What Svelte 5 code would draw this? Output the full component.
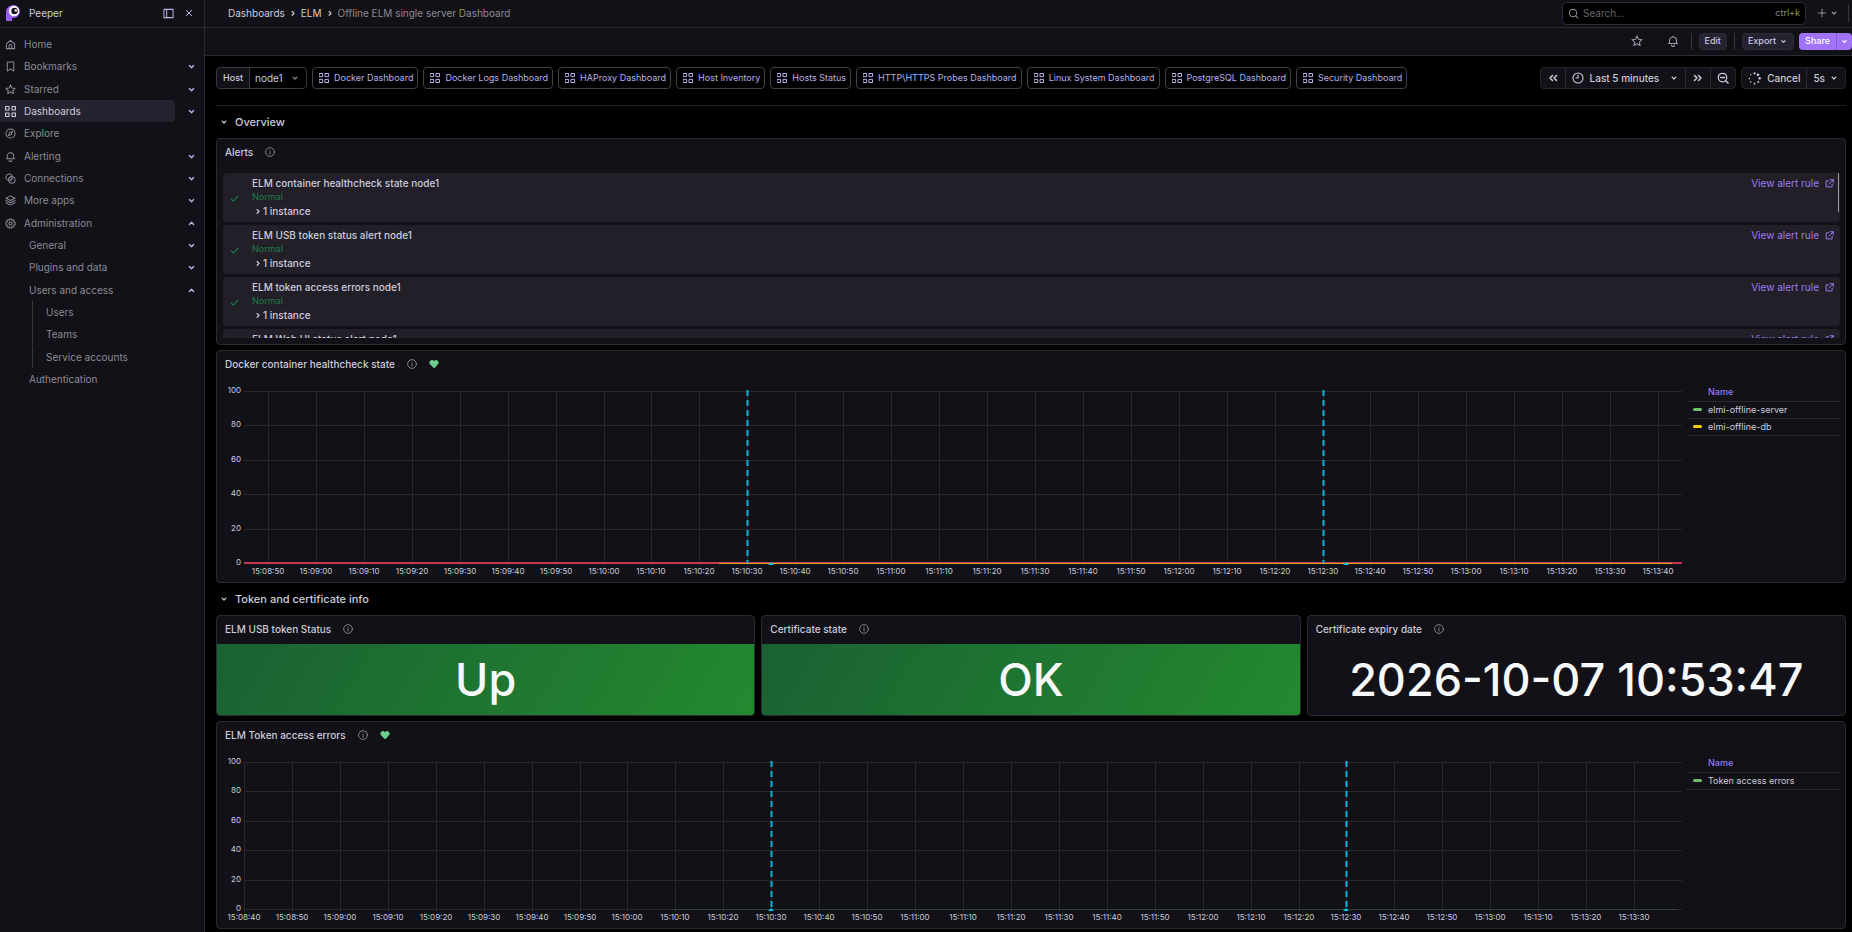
<script lang="ts">
	interface NavItem {
		label: string;
		icon?: string;
		level: number;
		arrow?: 'down' | 'up';
		active?: boolean;
	}

	interface Chart {
		id: string;
		title: string;
		/** offset of the first tick from the left edge, in seconds */
		lead: number;
		/** time of the first tick, in seconds since midnight */
		first: number;
		/** plot height */
		height: number;
		lines: { color: string; from: number; to: number; width: number }[];
		annotations: { line: number; mark: number }[];
		legend: { name: string; color: string }[];
	}

	const nav: NavItem[] = [
		{ label: 'Home', icon: 'home', level: 0 },
		{ label: 'Bookmarks', icon: 'bookmark', level: 0, arrow: 'down' },
		{ label: 'Starred', icon: 'star', level: 0, arrow: 'down' },
		{ label: 'Dashboards', icon: 'apps', level: 0, arrow: 'down', active: true },
		{ label: 'Explore', icon: 'compass', level: 0 },
		{ label: 'Alerting', icon: 'bell', level: 0, arrow: 'down' },
		{ label: 'Connections', icon: 'link', level: 0, arrow: 'down' },
		{ label: 'More apps', icon: 'layers', level: 0, arrow: 'down' },
		{ label: 'Administration', icon: 'cog', level: 0, arrow: 'up' },
		{ label: 'General', level: 1, arrow: 'down' },
		{ label: 'Plugins and data', level: 1, arrow: 'down' },
		{ label: 'Users and access', level: 1, arrow: 'up' },
		{ label: 'Users', level: 2 },
		{ label: 'Teams', level: 2 },
		{ label: 'Service accounts', level: 2 },
		{ label: 'Authentication', level: 1 }
	];

	const links = [
		'Docker Dashboard',
		'Docker Logs Dashboard',
		'HAProxy Dashboard',
		'Host Inventory',
		'Hosts Status',
		'HTTP\\HTTPS Probes Dashboard',
		'Linux System Dashboard',
		'PostgreSQL Dashboard',
		'Security Dashboard'
	];

	const alerts = [
		'ELM container healthcheck state node1',
		'ELM USB token status alert node1',
		'ELM token access errors node1',
		'ELM Web UI status alert node1'
	];

	const stats = [
		{ title: 'ELM USB token Status', value: 'Up', ok: true },
		{ title: 'Certificate state', value: 'OK', ok: true },
		{ title: 'Certificate expiry date', value: '2026-10-07 10:53:47', ok: false }
	];

	const at = (h: number, m: number, s: number) => h * 3600 + m * 60 + s;

	const health: Chart = {
		id: 'health',
		title: 'Docker container healthcheck state',
		lead: 5,
		first: at(15, 8, 50),
		height: 172,
		lines: [
			{ color: '#c4394f', from: 0, to: 300, width: 2 },
			{ color: '#d6a52c', from: 99, to: 298, width: 1 }
		],
		annotations: [
			{ line: 105, mark: 110 },
			{ line: 225, mark: 230 }
		],
		legend: [
			{ name: 'elmi-offline-server', color: '#73bf69' },
			{ name: 'elmi-offline-db', color: '#f2cc0c' }
		]
	};

	const tokens: Chart = {
		id: 'tokens',
		title: 'ELM Token access errors',
		lead: 0,
		first: at(15, 8, 40),
		height: 147,
		lines: [{ color: '#2c4432', from: 89, to: 299, width: 1 }],
		annotations: [
			{ line: 110, mark: 110 },
			{ line: 230, mark: 230 }
		],
		legend: [{ name: 'Token access errors', color: '#73bf69' }]
	};

	const span = 300;
	const axis = 27;

	// small glyphs that need a heavier stroke
	const heavy = ['down', 'up', 'right', 'back', 'forward', 'check', 'close', 'external', 'zoom-out'];

	let widths = $state<Record<string, number>>({ health: 1466, tokens: 1466 });

	function clock(t: number) {
		return [Math.floor(t / 3600), Math.floor(t / 60) % 60, t % 60]
			.map((n) => String(n).padStart(2, '0'))
			.join(':');
	}

	function ticks(chart: Chart) {
		const list = [];
		for (let s = chart.lead; s < span - 4; s += 10) {
			list.push({ s, label: clock(chart.first + s - chart.lead) });
		}
		return list;
	}
</script>

{#snippet icon(name: string, size = 12)}
	<svg
		class="icon"
		width={size}
		height={size}
		viewBox="0 0 24 24"
		fill="none"
		stroke="currentColor"
		stroke-width={heavy.includes(name) ? 3 : 2.2}
		stroke-linecap="round"
		stroke-linejoin="round"
		aria-hidden="true"
	>
		{#if name === 'home'}
			<path d="M3 10.5 12 3l9 7.500V21H3zM9 21v-6a3 3 0 0 1 6 0v6" />
		{:else if name === 'bookmark'}
			<path d="M5 2h14v20l-7-5-7 5z" />
		{:else if name === 'star'}
			<path d="m12 2 3 6.500 7 .9-5.200 4.800L18.200 21 12 17.500 5.800 21l1.400-6.800L2 9.400l7-.9z" />
		{:else if name === 'apps'}
			<path
				d="M1.200 1.200h7.500v7.500H1.200zM15.300 1.200h7.500v7.500h-7.500zM1.200 15.300h7.500v7.500H1.200zM15.300 15.300h7.500v7.500h-7.500z"
				stroke-width="2.400"
			/>
		{:else if name === 'compass'}
			<circle cx="12" cy="12" r="10" />
			<path d="m16.500 7.500-2.500 6.500-6.500 2.500L10 10z" />
		{:else if name === 'bell'}
			<path d="M12 2v2M5 17v-6a7 7 0 0 1 14 0v6M3 17h18M9 20a3 3 0 0 0 6 0" />
		{:else if name === 'link'}
			<circle cx="9" cy="9" r="7" />
			<circle cx="15" cy="15" r="7" />
			<path d="m8 12 4-4M12 16l4-4" />
		{:else if name === 'layers'}
			<path d="m12 2 10 5-10 5L2 7zM2 12l10 5 10-5M2 17l10 5 10-5" />
		{:else if name === 'cog'}
			<circle cx="12" cy="12" r="3.500" />
			<path
				d="m9.500 2-.6 3-2.600-1.200-2.500 2.500L5 8.900l-3 .6v5l3 .6-1.200 2.600 2.500 2.500L8.900 19l.6 3h5l.6-3 2.600 1.200 2.500-2.500-1.200-2.600 3-.6v-5l-3-.6 1.200-2.600-2.500-2.500L15.100 5l-.6-3z"
			/>
		{:else if name === 'down'}
			<path d="m7.500 10 4.500 4.500 4.500-4.500" />
		{:else if name === 'up'}
			<path d="m7.500 14 4.500-4.500 4.500 4.500" />
		{:else if name === 'right'}
			<path d="m10 8.500 4.500 4.500-4.500 4.500" />
		{:else if name === 'dock'}
			<path d="M2 3h20v18H2zM8 3v18" />
		{:else if name === 'close'}
			<path d="m4 4 16 16M20 4 4 20" />
		{:else if name === 'plus'}
			<path d="M12 3v18M3 12h18" />
		{:else if name === 'search'}
			<circle cx="11" cy="11" r="8" />
			<path d="m17 17 5 5" />
		{:else if name === 'zoom-out'}
			<circle cx="11" cy="11" r="8.500" stroke-width="2.500" />
			<path d="m17.500 17.500 4.500 4.500M7 11h8" />
		{:else if name === 'clock'}
			<circle cx="12" cy="12" r="10" />
			<path d="M12 6v6H8" />
		{:else if name === 'back'}
			<path d="m11 7-5 5 5 5M19 7l-5 5 5 5" />
		{:else if name === 'forward'}
			<path d="m13 7 5 5-5 5M5 7l5 5-5 5" />
		{:else if name === 'info'}
			<circle cx="12" cy="12" r="10.500" />
			<path d="M12 11v6M12 7v.5" />
		{:else if name === 'heart'}
			<path
				d="M12 21 3.500 12.500a5.200 5.200 0 0 1 0-7.500 5.200 5.200 0 0 1 7.500 0l1 1 1-1a5.200 5.200 0 0 1 7.500 0 5.200 5.200 0 0 1 0 7.500z"
				fill="currentColor"
			/>
		{:else if name === 'check'}
			<path d="m3 13 6 6L21 6" />
		{:else if name === 'external'}
			<path d="M10 5H3v16h16v-7M14 2h8v8M22 2 10 14" stroke-width="2.600" />
		{:else if name === 'spinner'}
			<g fill="currentColor" stroke="none">
				<circle cx="12" cy="2.500" r="2" />
				<circle cx="18.500" cy="5" r="2.400" />
				<circle cx="21.500" cy="11.500" r="2.300" />
				<circle cx="19" cy="18.500" r="1.800" />
				<circle cx="12" cy="21.500" r="1.600" />
				<circle cx="5" cy="18.500" r="1.500" />
				<circle cx="2.500" cy="12" r="1.400" />
				<circle cx="5" cy="5" r="1.300" />
			</g>
		{/if}
	</svg>
{/snippet}

{#snippet panelTitle(title: string, healthy = false)}
	<header class="panel-title">
		<h2>{title}</h2>
		<span class="muted">{@render icon('info', 10)}</span>
		{#if healthy}
			<span class="heart">{@render icon('heart', 10)}</span>
		{/if}
	</header>
{/snippet}

{#snippet timeseries(chart: Chart)}
	{@const plot = widths[chart.id] - axis}
	{@const x = (s: number) => Math.round(axis + (s / span) * plot)}
	<section class="panel">
		{@render panelTitle(chart.title, true)}
		<div class="chart">
			<div class="plot" bind:clientWidth={widths[chart.id]}>
				<svg width="100%" height={chart.height + 31} role="img" aria-label={chart.title}>
					<g transform="translate(0 12)">
						{#each [100, 80, 60, 40, 20, 0] as value, i}
							{@const y = Math.round((chart.height * i) / 5)}
							<rect class="grid" x={axis} {y} width={plot} height="1" />
							<text x={axis - 3} y={y + 2} text-anchor="end">{value}</text>
						{/each}
						{#each ticks(chart) as tick}
							<rect class="grid" x={x(tick.s)} y="0" width="1" height={chart.height + 3} />
							<text x={x(tick.s)} y={chart.height + 11} text-anchor="middle">{tick.label}</text>
						{/each}
						{#each chart.lines as line}
							<rect
								x={x(line.from)}
								y={chart.height - line.width + 1}
								width={x(line.to) - x(line.from)}
								height={line.width}
								fill={line.color}
							/>
						{/each}
						{#each chart.annotations as note}
							<line
								class="note"
								x1={x(note.line) + 0.5}
								x2={x(note.line) + 0.5}
								y1="-1"
								y2={chart.height}
							/>
							<path class="mark" d="M{x(note.mark) - 3} {chart.height + 2}h6l-3-3z" />
						{/each}
					</g>
				</svg>
			</div>
			<table class="legend">
				<thead>
					<tr><th>Name</th></tr>
				</thead>
				<tbody>
					{#each chart.legend as item}
						<tr>
							<td><i style="background: {item.color}"></i>{item.name}</td>
						</tr>
					{/each}
				</tbody>
			</table>
		</div>
	</section>
{/snippet}

<div class="app">
	<aside class="sidebar">
		<div class="brand">
			<svg width="16" height="18" viewBox="0 0 16 18" aria-hidden="true">
				<path d="M1 17V7.500A7.500 7 0 0 1 8.500 1a6.500 6.500 0 0 1 0 13H7v3z" fill="#9a5cff" />
				<circle cx="9" cy="7" r="5.200" fill="#fff" />
				<circle cx="9.500" cy="7" r="3.200" fill="#17151f" />
				<circle cx="10.800" cy="6.400" r="1.200" fill="#fff" />
			</svg>
			<span class="brand-name">Peeper</span>
			<button class="plain" aria-label="Undock menu">{@render icon('dock', 11)}</button>
			<button class="plain" aria-label="Close menu">{@render icon('close', 8)}</button>
		</div>
		<nav>
			<ul>
				{#each nav as item}
					<li class="level-{item.level}">
						<a href="#{item.label}" class:active={item.active}>
							{#if item.icon}{@render icon(item.icon, 11)}{/if}
							{item.label}
						</a>
						{#if item.arrow}
							<button class="plain" aria-label="Toggle {item.label}">
								{@render icon(item.arrow, 11)}
							</button>
						{/if}
					</li>
				{/each}
			</ul>
		</nav>
	</aside>

	<div class="content">
		<div class="topbar">
			<div class="crumbs">
				<a href="#dashboards">Dashboards</a>
				{@render icon('right', 10)}
				<a href="#elm">ELM</a>
				{@render icon('right', 10)}
				<span>Offline ELM single server Dashboard</span>
			</div>
			<label class="search">
				{@render icon('search', 11)}
				<input type="text" placeholder="Search..." aria-label="Search" />
				<kbd>ctrl+k</kbd>
			</label>
			<button class="plain add" aria-label="New">
				{@render icon('plus', 10)}
				{@render icon('down', 10)}
			</button>
			<span class="rule"></span>
		</div>

		<div class="actions">
			<button class="plain star" aria-label="Mark as favorite">{@render icon('star', 12)}</button>
			<button class="plain bell" aria-label="Notifications">{@render icon('bell', 12)}</button>
			<span class="rule"></span>
			<button class="small">Edit</button>
			<span class="rule"></span>
			<button class="small">Export {@render icon('down', 9)}</button>
			<div class="share">
				<button>Share</button>
				<button aria-label="Share options">{@render icon('down', 9)}</button>
			</div>
		</div>

		<main>
			<div class="controls">
				<div class="variable">
					<label for="host">Host</label>
					<div class="select">
						<select id="host">
							<option>node1</option>
						</select>
						<span class="muted">{@render icon('down', 10)}</span>
					</div>
				</div>
				<div class="links">
					{#each links as link}
						<a href="#{link}">{@render icon('apps', 10)}{link}</a>
					{/each}
				</div>
				<div class="group">
					<button aria-label="Move time range backwards">{@render icon('back', 12)}</button>
					<button class="range">
						{@render icon('clock', 12)}
						<span>Last 5 minutes</span>
						{@render icon('down', 10)}
					</button>
					<button aria-label="Move time range forwards">{@render icon('forward', 12)}</button>
					<button aria-label="Zoom out time range">{@render icon('zoom-out', 12)}</button>
				</div>
				<div class="group">
					<button>{@render icon('spinner', 13)} Cancel</button>
					<button class="interval">5s {@render icon('down', 10)}</button>
				</div>
			</div>

			<button class="row-title">{@render icon('down', 10)} Overview</button>

			<section class="panel alerts">
				{@render panelTitle('Alerts')}
				<ul>
					{#each alerts as alert}
						<li>
							<span class="check">{@render icon('check', 9)}</span>
							<div class="alert-body">
								<div>{alert}</div>
								<div class="state">Normal</div>
								<button class="plain instance">{@render icon('right', 10)}1 instance</button>
							</div>
							<a href="#rule">View alert rule {@render icon('external', 9)}</a>
						</li>
					{/each}
				</ul>
				<span class="thumb"></span>
			</section>

			{@render timeseries(health)}

			<button class="row-title">{@render icon('down', 10)} Token and certificate info</button>

			<div class="stats">
				{#each stats as stat}
					<section class="panel stat">
						{@render panelTitle(stat.title)}
						<div class="value" class:ok={stat.ok}>{stat.value}</div>
					</section>
				{/each}
			</div>

			{@render timeseries(tokens)}
		</main>
	</div>
</div>

<style>
	:global(body) {
		background: #000;
	}
	.app {
		display: flex;
		min-height: 100vh;
		overflow: hidden;
		box-sizing: border-box;
		font-family: Inter, 'Liberation Sans', sans-serif;
		font-size: 10px;
		line-height: 14px;
		color: #ccccdc;
	}
	.app * {
		box-sizing: border-box;
	}
	button,
	input,
	select {
		font: inherit;
		color: inherit;
		margin: 0;
	}
	a {
		color: inherit;
		text-decoration: none;
	}
	ul {
		list-style: none;
		margin: 0;
		padding: 0;
	}
	.icon {
		display: block;
		flex: none;
	}
	.plain {
		display: flex;
		align-items: center;
		padding: 0;
		border: 0;
		background: none;
	}
	.rule {
		width: 1px;
		height: 17px;
		background: #38373f;
	}

	/* sidebar */
	.sidebar {
		flex: none;
		width: 205px;
		background: #121117;
		border-right: 1px solid #2b2a31;
	}
	.brand {
		display: flex;
		align-items: center;
		gap: 11px;
		height: 28px;
		padding: 0 11px 1px 5px;
		border-bottom: 1px solid #2b2a31;
	}
	.brand-name {
		flex: 1;
		margin-left: -3px;
	}
	.brand .plain {
		color: #b9b1e8;
	}
	nav {
		padding-top: 5px;
	}
	nav li {
		display: flex;
		align-items: center;
		height: 22px;
		padding-right: 7px;
		color: #8b8b95;
	}
	nav li:nth-child(3n + 2) {
		margin-bottom: 1px;
	}
	nav a {
		display: flex;
		align-items: center;
		gap: 8px;
		width: 175px;
		height: 22px;
		padding-left: 5px;
		border-radius: 0 4px 4px 0;
	}
	nav a.active {
		background: #25232f;
		color: #ccccdc;
	}
	nav .plain {
		margin-left: auto;
		color: #b9b1e8;
	}
	.level-1 a {
		padding-left: 29px;
	}
	.level-2 a {
		margin-left: 32px;
		padding-left: 13px;
		border-left: 1px solid #38373f;
		border-radius: 0;
	}

	/* top bars */
	.content {
		flex: 1;
		min-width: 0;
	}
	.topbar,
	.actions {
		display: flex;
		align-items: center;
		height: 28px;
		padding-bottom: 1px;
		background: #121117;
		border-bottom: 1px solid #2b2a31;
	}
	.topbar {
		padding-right: 3px;
		padding-left: 23px;
	}
	.crumbs {
		display: flex;
		align-items: center;
		gap: 3px;
		flex: 1;
	}
	.crumbs span {
		color: #8b8b95;
	}
	.search {
		display: flex;
		align-items: center;
		gap: 4px;
		width: 244px;
		height: 23px;
		padding: 0 5px;
		background: #000;
		border: 1px solid #2b2a31;
		border-radius: 5px;
		color: #8b8b95;
	}
	.search input {
		flex: 1;
		min-width: 0;
		padding: 0;
		border: 0;
		outline: 0;
		background: none;
	}
	.search input::placeholder {
		color: #65646d;
		opacity: 1;
	}
	kbd {
		font: inherit;
		font-size: 9px;
	}
	.add {
		gap: 2px;
		margin: 0 9px 0 11px;
		color: #9a99a5;
	}
	.actions {
		justify-content: flex-end;
		gap: 7px;
	}
	.actions .plain {
		color: #9a99a5;
	}
	.star,
	.bell {
		padding: 0 5px 0 12px;
	}
	.small {
		display: flex;
		align-items: center;
		gap: 3px;
		height: 17px;
		padding: 0 5px;
		background: #25232f;
		border: 1px solid #2d2b38;
		border-radius: 4px;
		font-size: 9px;
		font-weight: 500;
		line-height: 12px;
		color: #c7c3ea;
	}
	.share {
		display: flex;
		margin-left: -2px;
	}
	.share button {
		display: flex;
		align-items: center;
		height: 17px;
		padding: 0 6px;
		border: 0;
		background: #a073f8;
		border-radius: 4px 0 0 4px;
		font-size: 9px;
		font-weight: 500;
		line-height: 12px;
		color: #fff;
	}
	.share button + button {
		padding: 0 3px;
		border-left: 1px solid #8359d6;
		border-radius: 0 4px 4px 0;
	}

	/* dashboard controls */
	main {
		padding: 11px 6px 0 11px;
	}
	.controls {
		display: flex;
		gap: 5px;
		margin-bottom: 5px;
		padding-bottom: 16px;
		border-bottom: 1px solid #1f1f22;
	}
	.variable {
		display: flex;
		height: 22px;
		border: 1px solid #38373f;
		border-radius: 4px;
	}
	.variable label {
		padding: 3px 6px;
		background: #121117;
		border-right: 1px solid #38373f;
		border-radius: 4px 0 0 4px;
		font-size: 9px;
		font-weight: 500;
	}
	.select {
		display: flex;
		align-items: center;
		padding: 0 6px 0 5px;
	}
	.select select {
		width: 35px;
		padding: 0;
		border: 0;
		background: none;
		appearance: none;
	}
	.links {
		display: flex;
		flex: 1;
		gap: 5px;
	}
	.links a {
		display: flex;
		align-items: center;
		gap: 5px;
		height: 22px;
		padding: 0 4px 0 6px;
		border: 1px solid #414046;
		border-radius: 4px;
		font-size: 9px;
		color: #b9b1e8;
		white-space: nowrap;
	}
	.group {
		display: flex;
		height: 22px;
		background: #121117;
		border: 1px solid #25242b;
		border-radius: 4px;
	}
	.group button {
		display: flex;
		align-items: center;
		gap: 6px;
		padding: 0 6px;
		border: 0;
		background: none;
		font-weight: 500;
	}
	.group button + button {
		border-left: 1px solid #2b2a31;
	}
	.group .interval {
		gap: 4px;
	}
	.range span {
		margin-right: 4px;
	}

	/* panels */
	.row-title {
		display: flex;
		align-items: center;
		gap: 6px;
		height: 22px;
		margin-bottom: 5px;
		padding: 0 3px;
		border: 0;
		background: none;
		font-size: 11px;
		font-weight: 500;
	}
	.panel {
		position: relative;
		margin-bottom: 5px;
		background: #121117;
		border: 1px solid #2b2a31;
		border-radius: 4px;
		overflow: hidden;
	}
	.panel-title {
		display: flex;
		align-items: center;
		gap: 12px;
		height: 28px;
		padding: 0 8px 2px;
	}
	h2 {
		margin: 0;
		font-size: 10px;
		font-weight: 500;
		line-height: 14px;
	}
	.muted {
		color: #8b8b95;
	}
	.heart {
		color: #6ccf8e;
	}
	.alerts ul {
		height: 165px;
		margin: 6px 5px 6px 6px;
		overflow: hidden;
	}
	.alerts li {
		display: flex;
		align-items: flex-start;
		height: 49px;
		margin-bottom: 3px;
		padding: 3px 6px 2px 7px;
		background: #221f28;
		border-radius: 4px;
	}
	.check,
	.state {
		color: #1f7a4a;
	}
	.check {
		align-self: center;
	}
	.alert-body {
		flex: 1;
		margin-left: 13px;
		font-weight: 500;
	}
	.state {
		font-size: 9px;
		font-weight: 400;
	}
	.instance {
		padding-left: 1px;
	}
	.alerts a {
		display: flex;
		align-items: center;
		gap: 6px;
		color: #9d7cf0;
	}
	.thumb {
		position: absolute;
		top: 34px;
		right: 6px;
		width: 1px;
		height: 39px;
		background: #9a99a5;
	}
	.chart {
		display: flex;
		align-items: flex-start;
	}
	.plot {
		flex: 1;
		min-width: 0;
	}
	.plot svg {
		display: block;
	}
	.grid {
		fill: #28272d;
	}
	text {
		font-size: 8px;
		fill: #ccccdc;
	}
	.note {
		stroke: #00b8dc;
		stroke-width: 2;
		stroke-dasharray: 6 4;
	}
	.mark {
		fill: #00c8ee;
	}
	.legend {
		width: 153px;
		margin: 5px 5px 0;
		border-collapse: collapse;
		font-size: 9px;
	}
	.legend th,
	.legend td {
		height: 17px;
		padding: 0 0 0 21px;
		border-bottom: 1px solid #2b2a31;
		text-align: left;
		line-height: 16px;
	}
	.legend th {
		font-weight: 500;
		color: #9d7cf0;
	}
	.legend i {
		display: inline-block;
		width: 9px;
		height: 3px;
		margin: 0 6px 2px -15px;
		border-radius: 2px;
	}
	.stats {
		display: grid;
		grid-template-columns: repeat(3, 1fr);
		gap: 6px;
	}
	.value {
		height: 71px;
		font-size: 45px;
		font-weight: 500;
		line-height: 71px;
		text-align: center;
		color: #f7f8fa;
	}
	.value.ok {
		background: linear-gradient(120deg, #1a6133, #23892f);
	}
</style>
